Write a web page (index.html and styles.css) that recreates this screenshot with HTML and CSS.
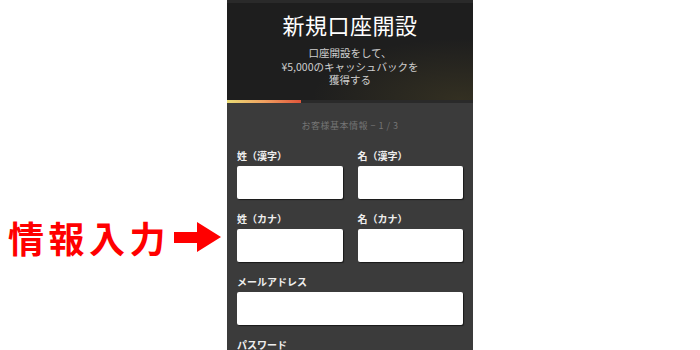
FILE: index.html
```html
<!DOCTYPE html>
<html lang="ja">
<head>
	<meta charset="UTF-8" />
	<title>新規口座開設</title>
	<link rel="stylesheet" href="styles.css">
</head>
<body>
	<div class="page">
		<div class="note">
			<span class="noteText">情報入力</span>
			<svg class="arrow" width="47" height="30" viewBox="0 0 47 30">
				<polygon points="0,10 23,10 23,0 47,15 23,30 23,21 0,21" fill="#ff0000" />
			</svg>
		</div>
		<div class="phone">
			<div class="hero">
				<h1>新規口座開設</h1>
				<p>口座開設をして、<br />¥5,000のキャッシュバックを<br />獲得する</p>
			</div>
			<div class="progress"><div class="progressBar"></div></div>
			<form class="signup" action="">
				<div class="step">お客様基本情報 − 1 / 3</div>
				<div class="row">
					<div class="field"><label>姓（漢字）</label><input type="text" /></div>
					<div class="field"><label>名（漢字）</label><input type="text" /></div>
				</div>
				<div class="row">
					<div class="field"><label>姓（カナ）</label><input type="text" /></div>
					<div class="field"><label>名（カナ）</label><input type="text" /></div>
				</div>
				<div class="row">
					<div class="field"><label>メールアドレス</label><input type="text" /></div>
				</div>
				<div class="row">
					<div class="field"><label>パスワード</label><input type="password" /></div>
				</div>
			</form>
		</div>
		<div></div>
	</div>
</body>
</html>
```

FILE: styles.css
```css
html, body {
	margin: 0;
	padding: 0;
	height: 100%;
}
body {
	background-color: #fff;
	font-family: "Noto Sans CJK JP", "Noto Sans", sans-serif;
	overflow: hidden;
}
.page {
	display: grid;
	grid-template-columns: 1fr 246px 1fr;
	height: 350px;
}
.note {
	display: flex;
	align-items: center;
	padding: 220px 0 0 8px;
	height: 34px;
}
.noteText {
	color: #ff0000;
	font-size: 36px;
	font-weight: bold;
	letter-spacing: 4.5px;
	line-height: 34px;
}
.arrow {
	margin-left: 4px;
	display: block;
}
.phone {
	background-color: #3b3b3b;
	height: 350px;
	overflow: hidden;
}
.hero {
	height: 97px;
	border-top: 3px solid #2a2a2a;
	background: radial-gradient(ellipse at 95% 100%, rgba(90, 80, 40, 0.35), rgba(30, 30, 30, 0) 45%), #1e1e1e;
	text-align: center;
	color: #fff;
	overflow: hidden;
}
.hero h1 {
	margin: 8px 0 0;
	font-size: 22px;
	font-weight: normal;
	line-height: 26px;
	letter-spacing: 0.5px;
}
.hero p {
	margin: 9px 0 0;
	font-size: 10.5px;
	line-height: 13.5px;
	color: #cfcfcf;
}
.progress {
	height: 3px;
	background-color: #2a2a2a;
}
.progressBar {
	width: 74px;
	height: 3px;
	background-image: linear-gradient(to right, #e9db74, #f0a060, #e0553a);
}
.signup {
	margin: 0;
	padding: 16px 10px 0;
}
.step {
	text-align: center;
	font-size: 9px;
	line-height: 14px;
	color: #757575;
	letter-spacing: 0.5px;
	margin-bottom: 16px;
}
.row {
	display: flex;
	gap: 15px;
	margin-bottom: 13px;
}
.field {
	flex: 1;
}
.field label {
	display: block;
	font-size: 10px;
	line-height: 14px;
	color: #eeeeee;
	font-weight: bold;
	margin-bottom: 3px;
}
.field input {
	display: block;
	box-sizing: border-box;
	width: 100%;
	height: 33px;
	border: none;
	border-radius: 2px;
	background-color: #fff;
	box-shadow: 1px 1px 1px #1a1a1a;
	outline: none;
}
```
